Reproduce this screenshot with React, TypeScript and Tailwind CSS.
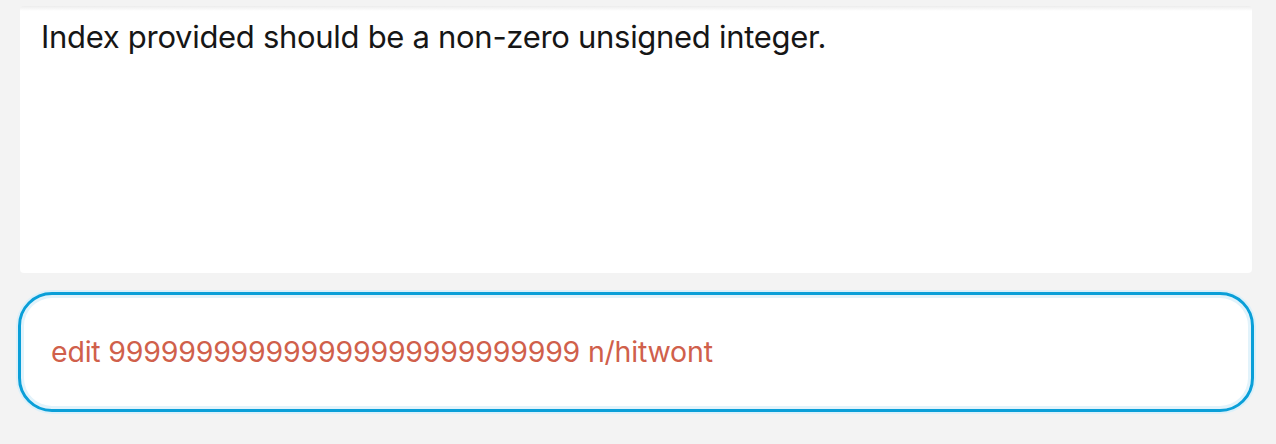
export default function App() {
  return (
    <div
      className="flex h-[444px] w-full flex-col bg-[#f3f3f3] pl-[18px] pr-[22px] pt-[6px]"
      style={{ fontFamily: "Inter, 'Noto Sans', sans-serif" }}
    >
      <div className="mx-[2px] h-[267px] rounded-[4px] bg-[linear-gradient(#ececec,#ffffff_5px)] px-[21px] pt-[11px]">
        <p className="text-[31px] leading-[40px] tracking-[-0.3px] text-[#161616]">
          Index provided should be a non-zero unsigned integer.
        </p>
      </div>
      <div className="mt-[19px] flex h-[120px] items-center rounded-[34px] border-[3px] border-[#0a9fd8] bg-white px-[30px] shadow-[0_0_0_2px_#dcf0f9,inset_0_0_0_3px_#e2f3fb]">
        <span className="text-[28.5px] leading-[34px] tracking-[-0.2px] text-[#d0604b]">
          edit 999999999999999999999999999 n/hitwont
        </span>
      </div>
    </div>
  );
}
